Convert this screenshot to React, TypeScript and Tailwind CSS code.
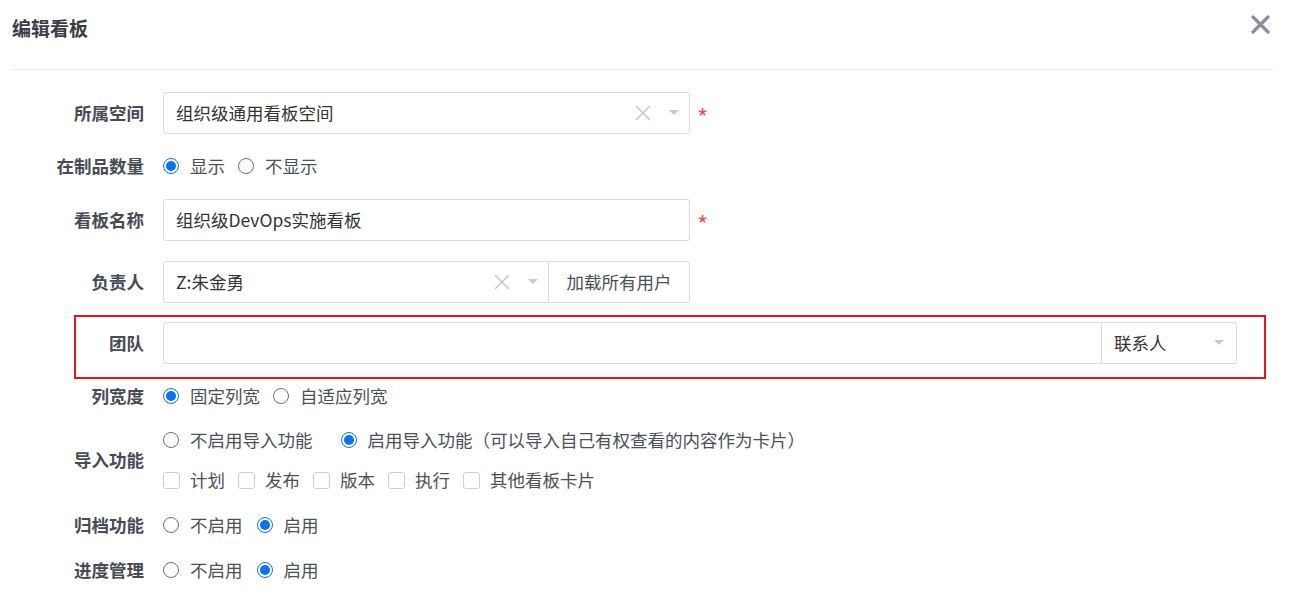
const font = { fontFamily: '"Noto Sans CJK SC", "Noto Sans", sans-serif' };

function Radio({ checked, label }: { checked?: boolean; label: string }) {
    return (
        <label className="flex items-center gap-[11px] text-[17.5px] text-[#4b505a]">
            <span
                className={`flex h-[16px] w-[16px] items-center justify-center rounded-full border ${checked ? 'border-[#0b72f0]' : 'border-[#6f6f6f]'}`}
            >
                {checked && <span className="h-[10px] w-[10px] rounded-full bg-[#0b72f0]" />}
            </span>
            {label}
        </label>
    );
}

function Checkbox({ label }: { label: string }) {
    return (
        <label className="flex items-center gap-[10px] text-[17.5px] text-[#4b505a]">
            <span className="h-[17px] w-[17px] rounded-[3px] border border-[#d0d0d0] bg-white" />
            {label}
        </label>
    );
}

function Caret() {
    return (
        <svg width="10" height="6" viewBox="0 0 10 6">
            <path d="M0 0 L10 0 L5 5 Z" fill="#c6cad3" />
        </svg>
    );
}

function ClearX() {
    return (
        <svg width="16" height="16" viewBox="0 0 16 16">
            <path d="M1 1 L15 15 M15 1 L1 15" stroke="#c8c8c8" strokeWidth="1.6" />
        </svg>
    );
}

function Label({ children, w = 'w-[144px]' }: { children: string; w?: string }) {
    return (
        <div className={`${w} shrink-0 text-right text-[17.5px] font-bold text-[#474b55]`}>{children}</div>
    );
}

function Required() {
    return <span className="ml-[7px] mt-[8px] text-[24px] leading-none text-[#f04d4d]">*</span>;
}

export default function App() {
    return (
        <div className="h-[597px] w-[1296px] overflow-hidden bg-white" style={font}>
            <div className="flex h-[57px] items-center justify-between pl-[12px] pr-[26px]">
                <h1 className="text-[19px] font-bold text-[#3a3d45]">编辑看板</h1>
                <svg width="19" height="19" viewBox="0 0 19 19" className="mb-[9px]">
                    <path d="M2 2 L17 17 M17 2 L2 17" stroke="#8a8e9b" strokeWidth="3.2" strokeLinecap="round" />
                </svg>
            </div>
            <div className="ml-[12px] mr-[23px] mt-[12px] border-t border-[#e8e8e8]" />

            <div className="flex flex-col pt-[22px]">
                {/* 所属空间 */}
                <div className="flex items-center gap-[19px]">
                    <Label>所属空间</Label>
                    <div className="flex items-center">
                        <div className="flex h-[42px] w-[527px] items-center rounded-[3px] border border-[#dcdcdc] pl-[12px] pr-[10px] text-[17.5px] text-[#333]">
                            <span className="flex-1">组织级通用看板空间</span>
                            <ClearX />
                            <span className="ml-[18px]"><Caret /></span>
                        </div>
                        <Required />
                    </div>
                </div>

                {/* 在制品数量 */}
                <div className="mt-[20px] flex h-[24px] items-center gap-[19px]">
                    <Label>在制品数量</Label>
                    <div className="flex items-center gap-[13px]">
                        <Radio checked label="显示" />
                        <Radio label="不显示" />
                    </div>
                </div>

                {/* 看板名称 */}
                <div className="mt-[21px] flex items-center gap-[19px]">
                    <Label>看板名称</Label>
                    <div className="flex items-center">
                        <div className="flex h-[42px] w-[527px] items-center rounded-[3px] border border-[#dcdcdc] px-[12px] text-[17.5px] text-[#333]">
                            组织级DevOps实施看板
                        </div>
                        <Required />
                    </div>
                </div>

                {/* 负责人 */}
                <div className="mt-[20px] flex items-center gap-[19px]">
                    <Label>负责人</Label>
                    <div className="flex h-[42px] w-[527px]">
                        <div className="flex w-[386px] items-center rounded-l-[3px] border border-[#dcdcdc] pl-[12px] pr-[10px] text-[17.5px] text-[#333]">
                            <span className="flex-1">Z:朱金勇</span>
                            <ClearX />
                            <span className="ml-[18px]"><Caret /></span>
                        </div>
                        <button className="flex-1 rounded-r-[3px] border border-l-0 border-[#dcdcdc] text-[17.5px] text-[#4b505a]">
                            加载所有用户
                        </button>
                    </div>
                </div>

                {/* 团队 */}
                <div className="ml-[74px] mt-[12px] flex w-[1192px] items-center gap-[19px] border-2 border-[#e8141c] pb-[13px] pr-[27px] pt-[5px]">
                    <Label w="w-[68px]">团队</Label>
                    <div className="flex h-[42px] flex-1">
                        <div className="flex-1 rounded-l-[3px] border border-[#dcdcdc]" />
                        <div className="flex w-[135px] items-center rounded-r-[3px] border border-l-0 border-[#dcdcdc] pl-[12px] pr-[12px] text-[17.5px] text-[#333]">
                            <span className="flex-1">联系人</span>
                            <Caret />
                        </div>
                    </div>
                </div>

                {/* 列宽度 */}
                <div className="mt-[5px] flex h-[24px] items-center gap-[19px]">
                    <Label>列宽度</Label>
                    <div className="flex items-center gap-[13px]">
                        <Radio checked label="固定列宽" />
                        <Radio label="自适应列宽" />
                    </div>
                </div>

                {/* 导入功能 */}
                <div className="mt-[20px] flex items-center gap-[19px]">
                    <Label>导入功能</Label>
                    <div className="flex flex-col gap-[16px]">
                        <div className="flex h-[24px] items-center gap-[28px]">
                            <Radio label="不启用导入功能" />
                            <Radio checked label="启用导入功能（可以导入自己有权查看的内容作为卡片）" />
                        </div>
                        <div className="flex h-[24px] items-center gap-[13px]">
                            <Checkbox label="计划" />
                            <Checkbox label="发布" />
                            <Checkbox label="版本" />
                            <Checkbox label="执行" />
                            <Checkbox label="其他看板卡片" />
                        </div>
                    </div>
                </div>

                {/* 归档功能 */}
                <div className="mt-[21px] flex h-[24px] items-center gap-[19px]">
                    <Label>归档功能</Label>
                    <div className="flex items-center gap-[14px]">
                        <Radio label="不启用" />
                        <Radio checked label="启用" />
                    </div>
                </div>

                {/* 进度管理 */}
                <div className="mt-[21px] flex h-[24px] items-center gap-[19px]">
                    <Label>进度管理</Label>
                    <div className="flex items-center gap-[14px]">
                        <Radio label="不启用" />
                        <Radio checked label="启用" />
                    </div>
                </div>
            </div>
        </div>
    );
}
